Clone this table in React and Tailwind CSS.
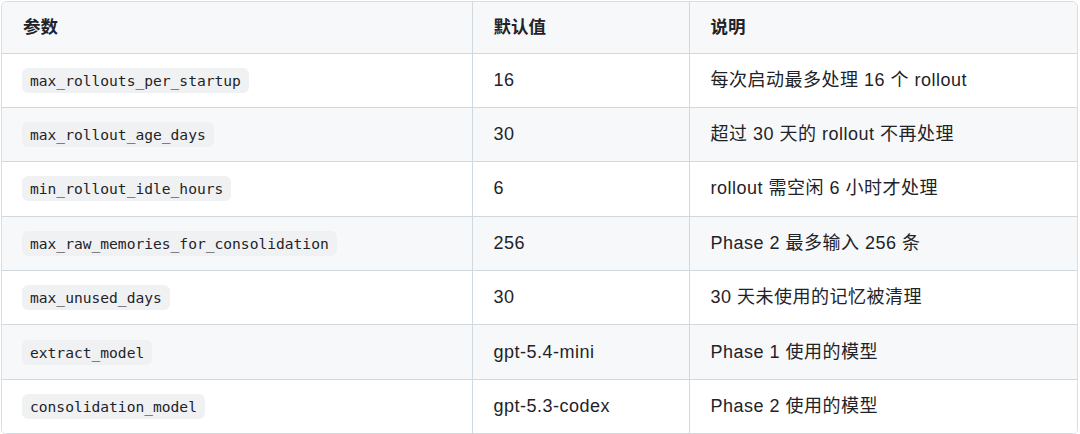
const rows = [
  ['max_rollouts_per_startup', '16', '每次启动最多处理 16 个 rollout'],
  ['max_rollout_age_days', '30', '超过 30 天的 rollout 不再处理'],
  ['min_rollout_idle_hours', '6', 'rollout 需空闲 6 小时才处理'],
  ['max_raw_memories_for_consolidation', '256', 'Phase 2 最多输入 256 条'],
  ['max_unused_days', '30', '30 天未使用的记忆被清理'],
  ['extract_model', 'gpt-5.4-mini', 'Phase 1 使用的模型'],
  ['consolidation_model', 'gpt-5.3-codex', 'Phase 2 使用的模型'],
]

export default function App() {
  return (
    <div
      className="w-[1080px] h-[434px] bg-white pt-px pl-px pr-[2px] overflow-hidden"
      style={{ fontFamily: '"Liberation Sans", "Noto Sans CJK SC", sans-serif' }}
    >
      <div className="rounded-md border border-[#d8dee4] overflow-hidden">
        <table className="w-full border-collapse table-fixed text-[18px] tracking-[0.5px] text-[#1f2328]">
          <colgroup>
            <col className="w-[470px]" />
            <col className="w-[217px]" />
            <col />
          </colgroup>
          <thead>
            <tr className="bg-[#f6f8fa] h-[51px] text-[17.5px] tracking-normal">
              <th className="text-left font-bold px-[21px] border-r border-b border-[#d1d9e0]">参数</th>
              <th className="text-left font-bold px-[21px] border-r border-b border-[#d1d9e0]">默认值</th>
              <th className="text-left font-bold px-[21px] border-b border-[#d1d9e0]">说明</th>
            </tr>
          </thead>
          <tbody>
            {rows.map(([name, value, desc], i) => (
              <tr key={name} className={`h-[54.4px] ${i % 2 === 1 ? 'bg-[#f6f8fa]' : 'bg-white'}`}>
                <td className="pl-[20px] pr-[21px] border-r border-b border-[#d1d9e0]">
                  <code
                    className="inline-block rounded-md bg-[#eff1f3] px-[8px] py-[3px] text-[14.6px] leading-[19px] tracking-normal"
                    style={{ fontFamily: '"DejaVu Sans Mono", "Liberation Mono", monospace' }}
                  >
                    {name}
                  </code>
                </td>
                <td className="px-[21px] border-r border-b border-[#d1d9e0]">{value}</td>
                <td className="px-[21px] border-b border-[#d1d9e0]">{desc}</td>
              </tr>
            ))}
          </tbody>
        </table>
      </div>
    </div>
  )
}
